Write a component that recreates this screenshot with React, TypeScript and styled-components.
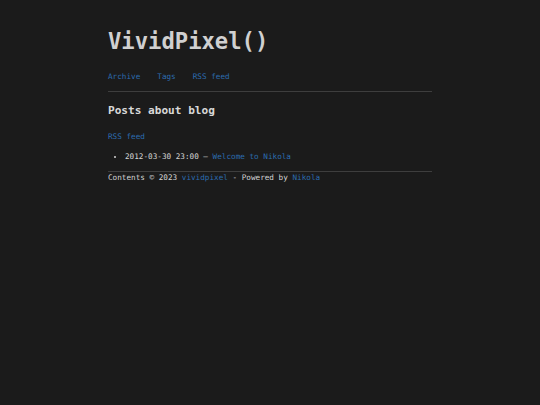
import React from "react";
import styled, { createGlobalStyle } from "styled-components";

const GlobalStyle = createGlobalStyle`
  html, body {
    margin: 0;
    padding: 0;
    background: #1b1b1b;
    color: #d4d4d4;
    font-family: "DejaVu Sans Mono", "Liberation Mono", monospace;
    font-size: 7.66px;
  }
`;

const Page = styled.div`
  width: 324px;
  margin: 0 auto;
  padding-top: 27px;
`;

const Header = styled.header`
  border-bottom: 1px solid #3e3e3e;
  padding-bottom: 10px;
`;

const Title = styled.h1`
  margin: 0;
  font-size: 22.2px;
  line-height: 28px;
  font-weight: bold;
  color: #d0d0d0;
`;

const Nav = styled.nav`
  display: flex;
  gap: 17px;
  margin-top: 17px;
`;

const Link = styled.a`
  color: #2c6cb0;
  text-decoration: none;
  cursor: pointer;
`;

const Heading = styled.h2`
  margin: 11px 0 0;
  font-size: 11.1px;
  line-height: 16px;
  font-weight: bold;
  color: #d8d8d8;
`;

const Feed = styled.p`
  margin: 13px 0 0;
  line-height: 10px;
`;

const PostList = styled.ul`
  margin: 10px 0 0;
  padding-left: 17px;
  line-height: 10px;
`;

const Footer = styled.footer`
  margin-top: 9px;
  border-top: 1px solid #3e3e3e;
  padding-top: 1px;
  line-height: 10px;
`;

export default function App() {
  return (
    <>
      <GlobalStyle />
      <Page>
        <Header>
          <Title>VividPixel()</Title>
          <Nav>
            <Link>Archive</Link>
            <Link>Tags</Link>
            <Link>RSS feed</Link>
          </Nav>
        </Header>
        <Heading>Posts about blog</Heading>
        <Feed>
          <Link>RSS feed</Link>
        </Feed>
        <PostList>
          <li>
            2012-03-30 23:00 — <Link>Welcome to Nikola</Link>
          </li>
        </PostList>
        <Footer>
          Contents © 2023 <Link>vividpixel</Link> - Powered by{" "}
          <Link>Nikola</Link>
        </Footer>
      </Page>
    </>
  );
}
